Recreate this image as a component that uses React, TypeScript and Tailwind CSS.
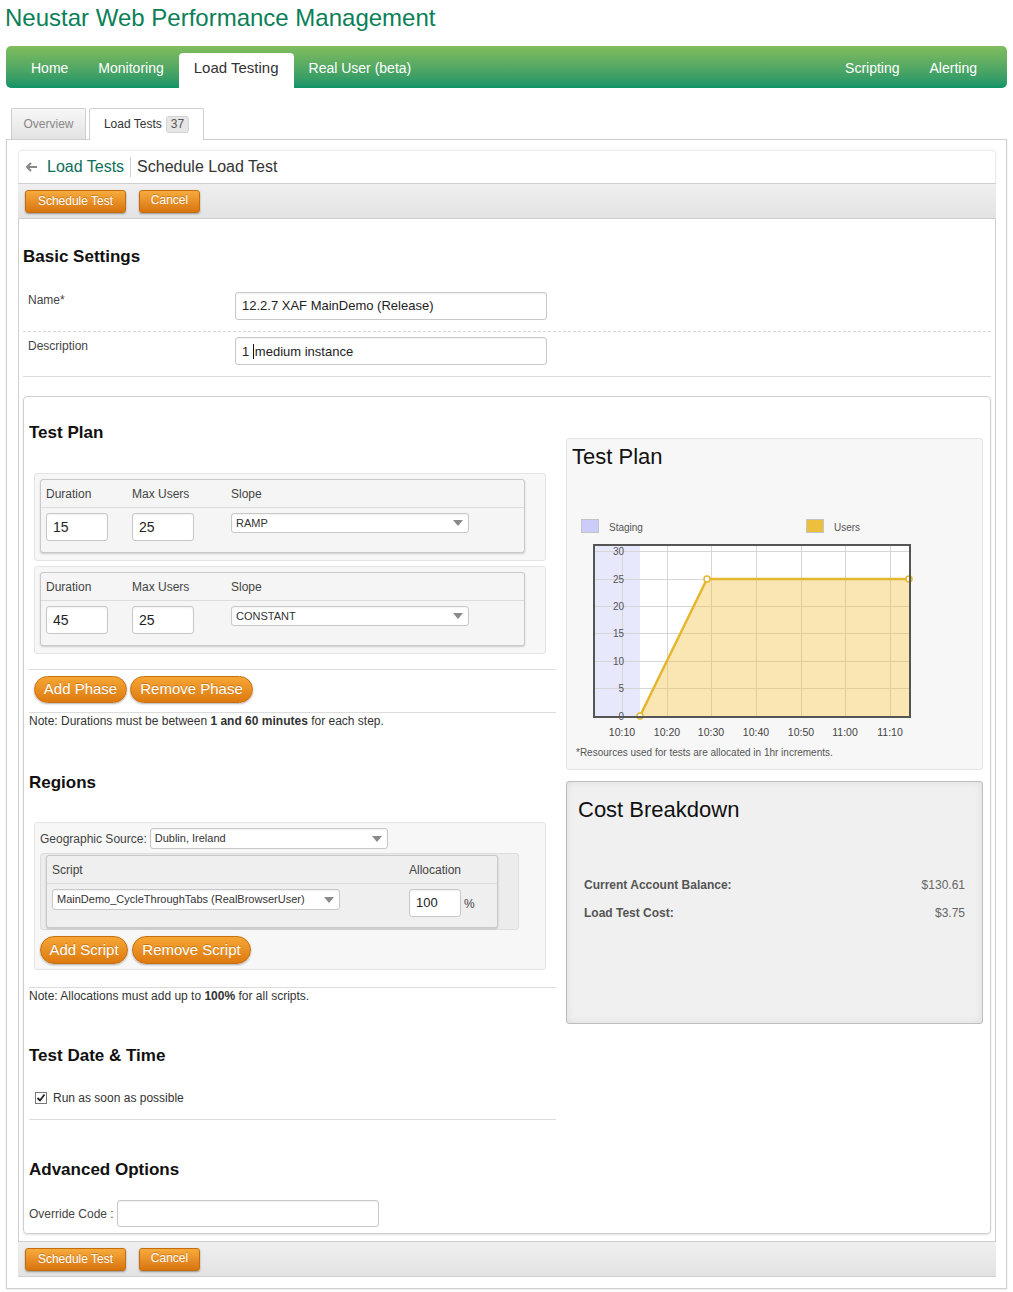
import React from "react";

const orangeSm =
  "flex h-[23px] items-center justify-center rounded-[3px] border border-[#c46c0c] bg-linear-to-b from-[#f7ab3c] to-[#d8740b] text-[12px] text-white shadow-[0_1px_2px_rgba(0,0,0,0.35)] [text-shadow:0_-1px_0_rgba(120,60,0,0.35)]";
const orangePill =
  "flex items-center justify-center rounded-full border border-[#c86f0f] bg-linear-to-b from-[#f6a634] to-[#dd7a0d] text-[15px] text-white shadow-[0_1px_2px_rgba(0,0,0,0.3)] [text-shadow:0_-1px_0_rgba(120,60,0,0.35)]";
const heading = "h-[22px] text-[17px] font-bold leading-[22px] text-[#111]";
const inputBox =
  "flex items-center rounded-[3px] border border-[#c8c8c8] bg-white shadow-[inset_0_1px_2px_rgba(0,0,0,0.06)]";

function Caret() {
  return (
    <svg width="10" height="6" viewBox="0 0 10 6" className="shrink-0">
      <path d="M0 0 L10 0 L5 6 Z" fill="#8a8a8a" />
    </svg>
  );
}

function Select({ w, h, text }: { w: string; h: string; text: string }) {
  return (
    <div className={`${inputBox} ${w} ${h} justify-between pl-[4px] pr-[5px]`}>
      <span className="text-[11px] text-[#333]">{text}</span>
      <Caret />
    </div>
  );
}

function Toolbar() {
  return (
    <div className="flex h-[36px] items-center gap-[13px] border-y border-[#cfcfcf] bg-linear-to-b from-[#efefef] to-[#e3e3e3] pl-[7px]">
      <button className={`${orangeSm} w-[101px]`}>Schedule Test</button>
      <button className={`${orangeSm} w-[61px] pb-[2px]`}>Cancel</button>
    </div>
  );
}

function Phase({ duration, users, slope }: { duration: string; users: string; slope: string }) {
  return (
    <div className="h-[88px] rounded-[3px] border border-[#e4e4e4] bg-[#f7f7f7] p-[5px]">
      <div className="w-[485px] rounded-[3px] border border-[#c9c9c9] bg-[#f5f5f5] shadow-[0_1px_2px_rgba(0,0,0,0.18)]">
        <div className="flex h-[28px] items-center border-b border-[#dcdcdc] pl-[5px] text-[12px] text-[#444]">
          <span className="w-[86px]">Duration</span>
          <span className="w-[99px]">Max Users</span>
          <span>Slope</span>
        </div>
        <div className="flex items-start pb-[11px] pl-[5px] pt-[5px]">
          <div className="w-[86px]">
            <div className={`${inputBox} h-[28px] w-[62px] pl-[6px] text-[14px] text-[#222]`}>{duration}</div>
          </div>
          <div className="w-[99px]">
            <div className={`${inputBox} h-[28px] w-[62px] pl-[6px] text-[14px] text-[#222]`}>{users}</div>
          </div>
          <Select w="w-[238px]" h="h-[20px]" text={slope} />
        </div>
      </div>
    </div>
  );
}

function Chart() {
  const hLines = [41, 69, 96, 123, 151, 178];
  const vLines = [55, 100, 144, 189, 234, 278, 323];
  const yLabels: [string, number][] = [
    ["30", 41],
    ["25", 69],
    ["20", 96],
    ["15", 123],
    ["10", 151],
    ["5", 178],
    ["0", 206],
  ];
  const xLabels = ["10:10", "10:20", "10:30", "10:40", "10:50", "11:00", "11:10"];
  return (
    <svg width="416" height="232" viewBox="0 0 416 232" className="block" fontFamily="'Liberation Sans', Arial, sans-serif">
      <rect x="14.5" y="9.5" width="17" height="13" fill="#ccccfa" stroke="#c4c4c4" />
      <text x="42" y="21" fontSize="10" fill="#555">Staging</text>
      <rect x="239.5" y="9.5" width="17" height="13" fill="#ecbf3c" stroke="#c4c4c4" />
      <text x="267" y="21" fontSize="10" fill="#555">Users</text>

      <rect x="27" y="35" width="316" height="172" fill="#fff" />
      <rect x="28" y="36" width="45" height="171" fill="#e8e8fd" />
      {hLines.map((y) => (
        <line key={y} x1="28" x2="342" y1={y + 0.5} y2={y + 0.5} stroke="#d6d6d6" />
      ))}
      {vLines.map((x) => (
        <line key={x} x1={x + 0.5} x2={x + 0.5} y1="36" y2="207" stroke="#d6d6d6" />
      ))}
      <polygon points="73,206 140,69 342,69 342,207 73,207" fill="#f0c040" fillOpacity="0.4" />
      <polyline points="73,206 140,69 342,69" fill="none" stroke="#e6b630" strokeWidth="2.5" />
      {[
        [73, 206],
        [140, 69],
        [342, 69],
      ].map(([x, y]) => (
        <circle key={x} cx={x} cy={y} r="3" fill="#fff" stroke="#e6b630" strokeWidth="1.5" />
      ))}
      <rect x="27" y="35" width="316" height="172" fill="none" stroke="#555" strokeWidth="2" />
      {yLabels.map(([t, y]) => (
        <text key={t} x="57" y={y + 3.5} fontSize="10" fill="#555" textAnchor="end">
          {t}
        </text>
      ))}
      {xLabels.map((t, i) => (
        <text key={t} x={vLines[i]} y="226" fontSize="10.5" fill="#444" textAnchor="middle">
          {t}
        </text>
      ))}
    </svg>
  );
}

export default function App() {
  return (
    <div className="w-[1013px] bg-white pb-[5px] font-['Liberation_Sans',Arial,sans-serif] text-[#333]">
      {/* title */}
      <div className="h-[46px] pl-[5px] pt-[4px] text-[24px] leading-[28px] text-[#0b8058]">
        Neustar Web Performance Management
      </div>

      {/* main nav */}
      <div className="mx-[6px] flex h-[42px] items-end rounded-[5px] bg-linear-to-b from-[#80bd5c] to-[#0c9468] pl-[10px] pr-[15px] text-[14px] text-white">
        <div className="flex h-full items-center px-[15px] pt-[2px]">Home</div>
        <div className="flex h-full items-center px-[15px] pt-[2px]">Monitoring</div>
        <div className="flex h-[35px] items-center rounded-t-[4px] bg-white px-[15px] pb-[4px] text-[15px] text-[#333]">
          Load Testing
        </div>
        <div className="flex h-full items-center px-[15px] pt-[2px]">Real User (beta)</div>
        <div className="flex-1" />
        <div className="flex h-full items-center px-[15px] pt-[2px]">Scripting</div>
        <div className="flex h-full items-center px-[15px] pt-[2px]">Alerting</div>
      </div>

      {/* sub tabs */}
      <div className="relative z-10 ml-[11px] mt-[20px] flex h-[31px] items-end gap-[3px] text-[12px]">
        <div className="flex h-[31px] w-[75px] items-center justify-center rounded-t-[2px] border border-b-0 border-[#cfcfcf] bg-linear-to-b from-[#f7f7f7] to-[#e3e3e3] text-[#888]">
          Overview
        </div>
        <div className="-mb-px flex h-[32px] w-[115px] items-center justify-center gap-[4px] rounded-t-[2px] border border-b-0 border-[#cfcfcf] bg-white pb-px text-[#333]">
          Load Tests
          <span className="rounded-[3px] border border-[#d4d4d4] bg-[#e6e6e6] px-[4px] leading-[15px] text-[#555]">37</span>
        </div>
      </div>

      {/* outer panel */}
      <div className="mx-[6px] border border-[#cfcfcf] pb-[11px] pl-[11px] pr-[10px] pt-[10px] shadow-[0_1px_2px_rgba(0,0,0,0.08)]">
        {/* breadcrumb */}
        <div className="flex h-[33px] items-center rounded-t-[5px] border border-b-0 border-[#ececec] bg-white pl-[7px] text-[16px] shadow-[0_-1px_3px_rgba(0,0,0,0.05)]">
          <svg width="12" height="10" viewBox="0 0 12 10">
            <path d="M5 1 L1 5 L5 9 M1 5 H11" fill="none" stroke="#888" strokeWidth="2" />
          </svg>
          <span className="ml-[9px] text-[#0c6f58]">Load Tests</span>
          <span className="mx-[6px] h-[20px] w-px bg-[#cfcfcf]" />
          <span className="text-[#333]">Schedule Load Test</span>
        </div>

        <Toolbar />

        {/* content */}
        <div className="border-x border-[#cfcfcf] bg-white px-[4px] pb-[7px] pt-[27px]">
          <div className={heading}>Basic Settings</div>

          <div className="flex border-b border-dashed border-[#d6d6d6] pb-[11px] pt-[24px]">
            <div className="w-[212px] pl-[5px] text-[12px] leading-[16px] text-[#444]">Name*</div>
            <div className={`${inputBox} h-[28px] w-[312px] pl-[6px] text-[13px] text-[#222]`}>
              12.2.7 XAF MainDemo (Release)
            </div>
          </div>
          <div className="flex border-b border-[#dcdcdc] pb-[11px] pt-[5px]">
            <div className="w-[212px] pl-[5px] pt-px text-[12px] leading-[16px] text-[#444]">Description</div>
            <div className={`${inputBox} h-[28px] w-[312px] pl-[6px] text-[13px] text-[#222]`}>
              <span>
                1 <span className="mr-px inline-block h-[15px] w-px translate-y-[3px] bg-[#111]" />
                medium instance
              </span>
            </div>
          </div>

          {/* inner panel */}
          <div className="mt-[19px] flex rounded-[4px] border border-[#cfcfcf] pb-[6px] pl-[5px] shadow-[0_1px_2px_rgba(0,0,0,0.12)]">
            {/* left column */}
            <div className="w-[527px]">
              <div className={`${heading} mt-[25px]`}>Test Plan</div>
              <div className="ml-[5px] mt-[29px] flex w-[512px] flex-col gap-[5px]">
                <Phase duration="15" users="25" slope="RAMP" />
                <Phase duration="45" users="25" slope="CONSTANT" />
              </div>
              <div className="mt-[15px] h-px bg-[#dcdcdc]" />
              <div className="ml-[5px] mt-[6px] flex gap-[3px]">
                <button className={`${orangePill} h-[27px] w-[93px]`}>Add Phase</button>
                <button className={`${orangePill} h-[27px] w-[123px]`}>Remove Phase</button>
              </div>
              <div className="mt-[9px] h-px bg-[#dcdcdc]" />
              <div className="text-[12px] leading-[17px] text-[#333]">
                Note: Durations must be between <b>1 and 60 minutes</b> for each step.
              </div>

              <div className={`${heading} mt-[42px]`}>Regions</div>
              <div className="ml-[5px] mt-[28px] w-[512px] rounded-[3px] border border-[#e4e4e4] bg-[#f7f7f7] pb-[5px] pl-[5px] pt-[5px]">
                <div className="flex items-center gap-[3px] text-[12px] text-[#444]">
                  Geographic Source:
                  <Select w="w-[238px]" h="h-[21px]" text="Dublin, Ireland" />
                </div>
                <div className="mt-[4px] w-[479px] rounded-[3px] border border-[#dddddd] bg-[#ececec] pb-px pl-[5px] pt-px">
                  <div className="w-[452px] rounded-[3px] border border-[#c9c9c9] bg-[#efefef] shadow-[0_1px_2px_rgba(0,0,0,0.18)]">
                    <div className="flex h-[28px] items-center border-b border-[#dcdcdc] pl-[5px] text-[12px] text-[#444]">
                      <span className="w-[357px]">Script</span>
                      <span>Allocation</span>
                    </div>
                    <div className="flex items-start pb-[10px] pl-[5px] pt-[5px]">
                      <div className="w-[357px]">
                        <Select w="w-[288px]" h="h-[21px]" text="MainDemo_CycleThroughTabs (RealBrowserUser)" />
                      </div>
                      <div className={`${inputBox} h-[28px] w-[52px] pl-[6px] text-[13px] text-[#222]`}>100</div>
                      <span className="ml-[3px] pt-[6px] text-[12px] text-[#444]">%</span>
                    </div>
                  </div>
                </div>
                <div className="mt-[6px] flex gap-[4px]">
                  <button className={`${orangePill} h-[28px] w-[88px]`}>Add Script</button>
                  <button className={`${orangePill} h-[28px] w-[119px]`}>Remove Script</button>
                </div>
              </div>
              <div className="mt-[17px] h-px bg-[#dcdcdc]" />
              <div className="text-[12px] leading-[17px] text-[#333]">
                Note: Allocations must add up to <b>100%</b> for all scripts.
              </div>

              <div className={`${heading} mt-[40px]`}>Test Date &amp; Time</div>
              <div className="ml-[6px] mt-[23px] flex h-[16px] items-center gap-[6px] text-[12px] text-[#333]">
                <span className="flex h-[12px] w-[12px] items-center justify-center border border-[#777] bg-white">
                  <svg width="10" height="10" viewBox="0 0 10 10">
                    <path d="M1.5 5 L4 7.5 L8.5 1.5" fill="none" stroke="#222" strokeWidth="1.8" />
                  </svg>
                </span>
                Run as soon as possible
              </div>
              <div className="mt-[13px] h-px bg-[#dcdcdc]" />

              <div className={`${heading} mt-[39px]`}>Advanced Options</div>
              <div className="mt-[19px] flex items-center gap-[3px] text-[12px] text-[#444]">
                Override Code :
                <div className={`${inputBox} h-[27px] w-[262px]`} />
              </div>
            </div>

            {/* right column */}
            <div className="ml-[10px] w-[417px]">
              <div className="mt-[41px] h-[332px] rounded-[3px] border border-[#e4e4e4] bg-[#f7f7f7]">
                <div className="pl-[5px] pt-[5px] text-[22px] leading-[26px] text-[#111]">Test Plan</div>
                <div className="mt-[40px]">
                  <Chart />
                </div>
                <div className="mt-[4px] pl-[9px] text-[10px] leading-[14px] text-[#555]">
                  *Resources used for tests are allocated in 1hr increments.
                </div>
              </div>
              <div className="mt-[11px] h-[243px] rounded-[3px] border border-[#bdbdbd] bg-[#f0f0f0] px-[17px] shadow-[inset_0_0_8px_rgba(0,0,0,0.08)]">
                <div className="-ml-[6px] pt-[14px] text-[22px] leading-[28px] text-[#111]">Cost Breakdown</div>
                <div className="mt-[53px] flex justify-between text-[12px] leading-[16px]">
                  <span className="font-bold text-[#555]">Current Account Balance:</span>
                  <span className="text-[#666]">$130.61</span>
                </div>
                <div className="mt-[12px] flex justify-between text-[12px] leading-[16px]">
                  <span className="font-bold text-[#555]">Load Test Cost:</span>
                  <span className="text-[#666]">$3.75</span>
                </div>
              </div>
            </div>
          </div>
        </div>

        <Toolbar />
      </div>
    </div>
  );
}
